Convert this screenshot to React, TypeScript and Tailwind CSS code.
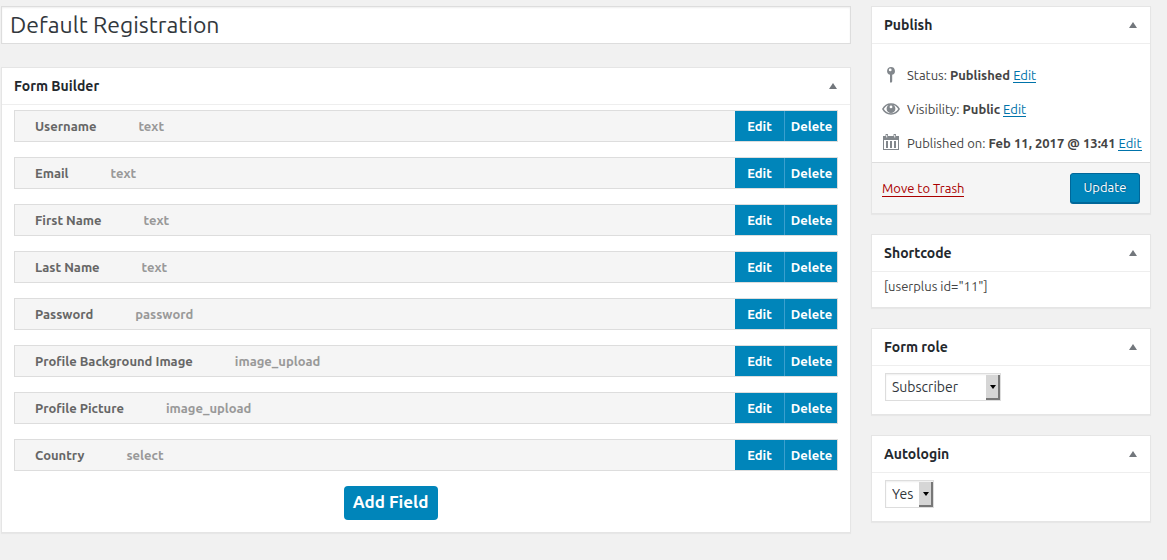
import { useState, type ReactNode } from 'react';

const fields = [
  { label: 'Username', type: 'text' },
  { label: 'Email', type: 'text' },
  { label: 'First Name', type: 'text' },
  { label: 'Last Name', type: 'text' },
  { label: 'Password', type: 'password' },
  { label: 'Profile Background Image', type: 'image_upload' },
  { label: 'Profile Picture', type: 'image_upload' },
  { label: 'Country', type: 'select' },
];

function Panel({ title, children }: { title: string; children: ReactNode }) {
  const [open, setOpen] = useState(true);
  return (
    <section className="border border-[#e5e5e5] bg-white shadow-[0_1px_1px_rgba(0,0,0,0.04)]">
      <header className="flex h-[37px] items-center justify-between border-b border-[#eee] px-3">
        <h2 className="text-sm font-bold text-[#23282d]">{title}</h2>
        <button type="button" aria-label={`Toggle ${title}`} aria-expanded={open} onClick={() => setOpen(!open)} className="flex h-6 w-2.5 items-center justify-center">
          <svg viewBox="0 0 8 6" className="h-1.5 w-2 fill-[#72777c]" aria-hidden="true">
            <path d="M4 0 8 6H0Z" />
          </svg>
        </button>
      </header>
      {open && children}
    </section>
  );
}

function EditLink() {
  return (
    <a href="#edit" className="border-b border-[#0073aa] text-[#0073aa]">
      Edit
    </a>
  );
}

function StatusRow({ icon, label, value }: { icon: ReactNode; label: string; value: string }) {
  return (
    <li className="flex items-center gap-1.5 whitespace-nowrap">
      <svg viewBox="0 0 20 20" className="size-5 shrink-0 fill-[#82878c]" aria-hidden="true">
        {icon}
      </svg>
      <p className="leading-4">
        {label} <strong className="font-bold">{value}</strong> <EditLink />
      </p>
    </li>
  );
}

function SelectBox({ label, options, className }: { label: string; options: string[]; className: string }) {
  return (
    <div className="px-[13px] pb-[13px] pt-[7px]">
      <div className={`relative ${className}`}>
        <select aria-label={label} className="block h-7 w-full appearance-none border border-[#ddd] bg-white pl-1.5 text-sm text-[#32373c] shadow-[inset_0_1px_2px_rgba(0,0,0,0.07)]">
          {options.map((o) => (
            <option key={o}>{o}</option>
          ))}
        </select>
        <span className="pointer-events-none absolute bottom-px right-px top-0.5 flex w-3.5 items-center justify-center border-b-2 border-r-2 border-[#777] border-r-[#777] bg-[#d6d6d6] pl-0.5">
          <svg viewBox="0 0 6 4" className="h-1 w-1.5" aria-hidden="true">
            <path d="M0 0H6L3 4Z" />
          </svg>
        </span>
      </div>
    </div>
  );
}

export default function App() {
  return (
    <div className="flex min-h-screen items-start gap-5 bg-[#f1f1f1] pb-6 pl-px pr-4 pt-1.5 font-[Ubuntu,'Noto_Sans',sans-serif] text-[13px] text-[#444]">
      <main className="min-w-0 flex-1">
        <input
          aria-label="Form title"
          defaultValue="Default Registration"
          className="mb-[23px] block h-[38px] w-full border border-[#ddd] bg-white px-2 pb-0.5 text-[23px] text-[#32373c] shadow-[inset_0_1px_2px_rgba(0,0,0,0.07)]"
        />
        <Panel title="Form Builder">
          <div className="flex flex-col items-start px-3 pb-3 pt-[5px]">
            <ul className="flex w-full flex-col gap-[15px]">
              {fields.map((f) => (
                <li key={f.label} className="flex h-8 items-center border border-[#ddd] bg-[#f5f5f5] pl-5 font-bold leading-5">
                  <span className="text-[#666]">{f.label}</span>
                  <span className="ml-[42px] text-[#999]">{f.type}</span>
                  <div className="ml-auto flex self-stretch text-white">
                    <button type="button" className="w-[49px] bg-[#0085ba]">
                      Edit
                    </button>
                    <button type="button" className="w-[53px] border-l border-[#3b9fce] bg-[#0085ba] pl-px">
                      Delete
                    </button>
                  </div>
                </li>
              ))}
            </ul>
            <button type="button" className="ml-[40%] mt-[15px] h-[34px] w-[94px] whitespace-nowrap rounded bg-[#0085ba] pb-0.5 text-[17px] font-bold text-white">
              Add Field
            </button>
          </div>
        </Panel>
      </main>

      <aside className="flex w-[280px] shrink-0 flex-col gap-5">
        <Panel title="Publish">
          <ul className="flex flex-col gap-3.5 px-[9px] pb-[9px] pt-[21px]">
            <StatusRow
              label="Status:"
              value="Published"
              icon={<path fillRule="evenodd" d="M10 2a4 4 0 0 1 1.200 7.800V16.500L10 18 9 17V9.850A4 4 0 0 1 10 2ZM9.200 3.500a1.400 1.400 0 1 0 0 2.800 1.400 1.400 0 0 0 0-2.800Z" />}
            />
            <StatusRow
              label="Visibility:"
              value="Public"
              icon={
                <>
                  <path fillRule="evenodd" d="M1 10C3 6.300 6 4.300 10 4.300S17 6.300 19 10C17 13.700 14 15.700 10 15.700S3 13.700 1 10ZM2.800 10C4.300 12.700 6.800 14.200 10 14.200S15.700 12.700 17.200 10C15.700 7.300 13.200 5.800 10 5.800S4.300 7.300 2.800 10Z" />
                  <path fillRule="evenodd" d="M10 5.300a4.400 4.400 0 1 1 0 8.800 4.400 4.400 0 0 1 0-8.800ZM10 6.500a1.400 1.400 0 1 0 0 2.800 1.400 1.400 0 0 0 0-2.800Z" />
                </>
              }
            />
            <StatusRow
              label="Published on:"
              value="Feb 11, 2017 @ 13:41"
              icon={
                <path fillRule="evenodd" d="M2 3H4.500V1.500Q4.500 1 5 1H6.500Q7 1 7 1.500V3H12.500V1.500Q12.500 1 13 1H14.500Q15 1 15 1.500V3H18V17H2ZM3 7V16H17V7ZM5.300 2V4.500H6.200V2ZM13.300 2V4.500H14.200V2ZM5 8H7V15H5ZM9 8H11V15H9ZM13 8H15V15H13Z" />
              }
            />
          </ul>
          <footer className="flex items-center justify-between border-t border-[#ddd] bg-[#f5f5f5] p-2.5">
            <a href="#trash" className="border-b border-[#a00] leading-4 text-[#a00]">
              Move to Trash
            </a>
            <button type="button" className="h-[30px] w-[70px] rounded-[3px] border border-[#006799] bg-[#0085ba] text-white shadow-[0_1px_0_#006799] [text-shadow:0_-1px_1px_#006799,1px_0_1px_#006799]">
              Update
            </button>
          </footer>
        </Panel>
        <Panel title="Shortcode">
          <p className="px-3 pb-3 pt-[5px] leading-[18px]">[userplus id="11"]</p>
        </Panel>
        <Panel title="Form role">
          <SelectBox label="Form role" options={['Subscriber', 'Editor', 'Author']} className="w-29" />
        </Panel>
        <Panel title="Autologin">
          <SelectBox label="Autologin" options={['Yes', 'No']} className="w-[49px]" />
        </Panel>
      </aside>
    </div>
  );
}
